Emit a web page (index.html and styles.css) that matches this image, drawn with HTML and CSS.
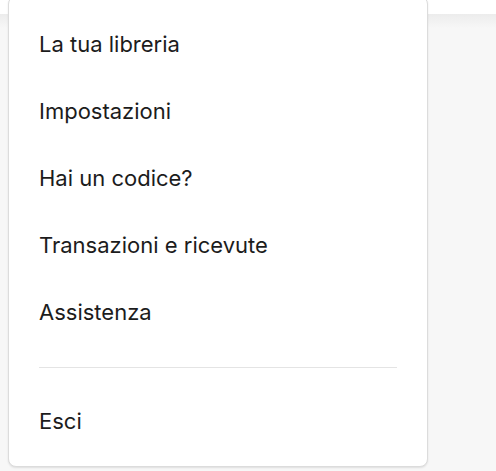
FILE: index.html
```html
<!DOCTYPE html>
<html>
	<head>
		<meta charset="UTF-8">
		<title>Menu</title>
		<link rel="stylesheet" href="styles.css">
	</head>
	<body>
		<div class="topbar"></div>
		<div class="content"></div>
		<!--menu utente-->
		<div class="menu">
			<ul class="menu-list">
				<li><a href="javascript:;">La tua libreria</a></li>
				<li><a href="javascript:;">Impostazioni</a></li>
				<li><a href="javascript:;">Hai un codice?</a></li>
				<li><a href="javascript:;">Transazioni e ricevute</a></li>
				<li><a href="javascript:;">Assistenza</a></li>
			</ul>
			<hr class="sep">
			<ul class="menu-list">
				<li><a href="javascript:;">Esci</a></li>
			</ul>
		</div>
	</body>
</html>
```

FILE: styles.css
```css
*{
	margin: 0;
	padding: 0;
}
body{
	font-family: Inter, "Noto Sans", sans-serif;
	background-color: #f7f7f7;
	height: 471px;
	overflow: hidden;
	position: relative;
}
.topbar{
	height: 14px;
	background-color: #fff;
}
.content{
	height: 457px;
	/*ombra sotto la barra*/
	background: linear-gradient(#ececec, #f7f7f7 14px);
}
.menu{
	position: absolute;
	left: 8px;
	top: -4px;
	width: 420px;
	background-color: #fff;
	border: 1px solid #dcdcdc;
	border-radius: 8px;
	box-shadow: 0 1px 2px rgba(0,0,0,0.1);
	padding: 14px 0 11px;
	box-sizing: border-box;
}
.menu-list{
	list-style: none;
}
.menu-list li a{
	display: block;
	padding: 0 30px;
	height: 67px;
	line-height: 67px;
	font-size: 22px;
	color: #1c1c1c;
	text-decoration: none;
}
.sep{
	border: none;
	border-top: 1px solid #e4e4e4;
	margin: 21px 30px 20px;
}
```
